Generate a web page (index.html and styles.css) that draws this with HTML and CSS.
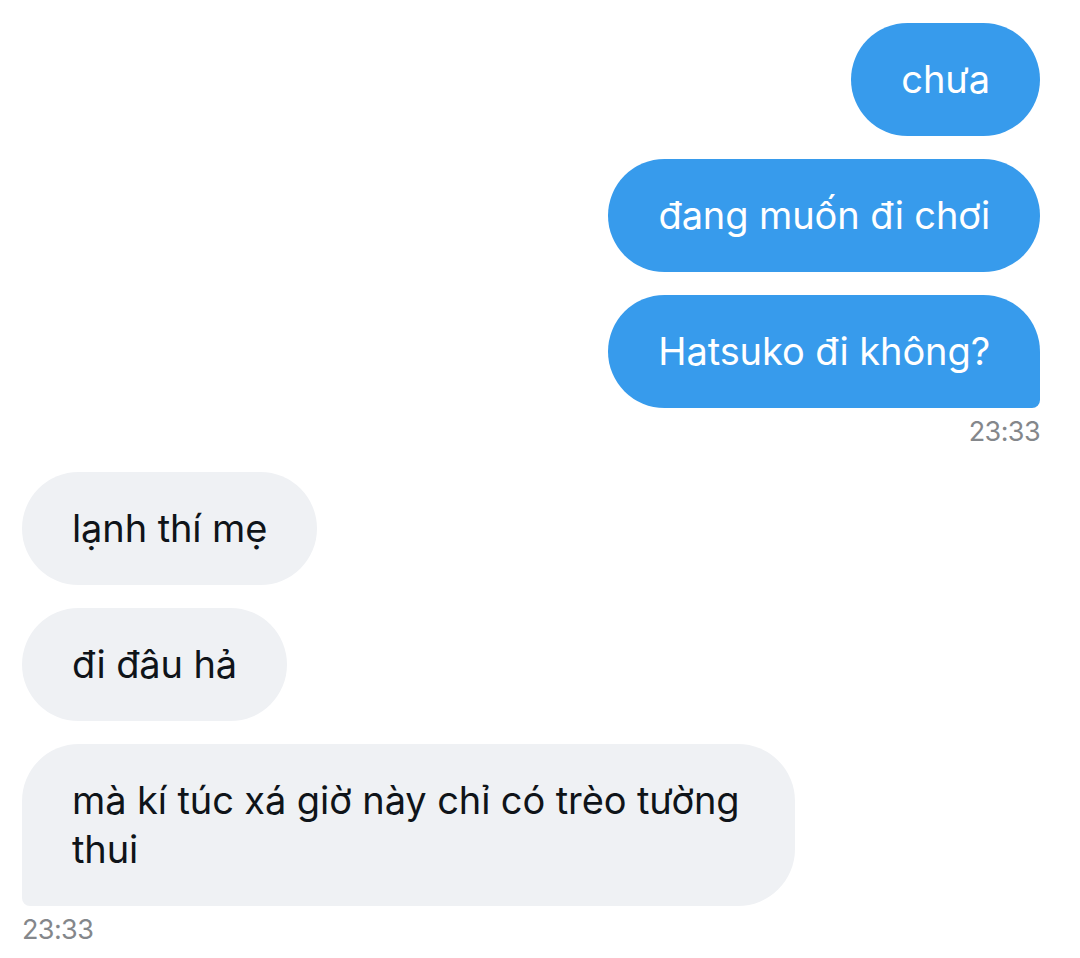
FILE: index.html
```html
<!DOCTYPE html>
<html lang="vi">
<head>
<meta charset="utf-8">
<title>Chat</title>
<link rel="stylesheet" href="styles.css">
</head>
<body>
<main class="chat">
  <section class="group out">
    <div class="bubble">chưa</div>
    <div class="bubble">đang muốn đi chơi</div>
    <div class="bubble last">Hatsuko đi không?</div>
    <div class="time">23:33</div>
  </section>
  <section class="group in">
    <div class="bubble">lạnh thí mẹ</div>
    <div class="bubble">đi đâu hả</div>
    <div class="bubble last">mà kí túc xá giờ này chỉ có trèo tường thui</div>
    <div class="time">23:33</div>
  </section>
</main>
</body>
</html>
```
FILE: styles.css
```css
html, body {
  margin: 0;
  padding: 0;
  background: #ffffff;
}
body {
  font-family: Inter, "Noto Sans", "Liberation Sans", sans-serif;
  -webkit-font-smoothing: antialiased;
}
.chat {
  display: flex;
  flex-direction: column;
  gap: 25px;
  padding: 23px 40px 0 22px;
}
.group {
  display: flex;
  flex-direction: column;
  gap: 23px;
}
.group.out {
  align-items: flex-end;
}
.group.in {
  align-items: flex-start;
}
.bubble {
  box-sizing: border-box;
  max-width: 773px;
  padding: 32px 50px;
  border-radius: 57px;
  font-size: 38px;
  line-height: 49px;
  letter-spacing: -0.1px;
}
.out .bubble {
  background: #379bec;
  color: #ffffff;
}
.in .bubble {
  background: #eff1f4;
  color: #0f1419;
}
.out .bubble.last {
  border-bottom-right-radius: 8px;
}
.in .bubble.last {
  border-bottom-left-radius: 8px;
}
.time {
  margin-top: -14px;
  font-size: 27px;
  line-height: 30px;
  color: #84878b;
  letter-spacing: -0.6px;
}
```
